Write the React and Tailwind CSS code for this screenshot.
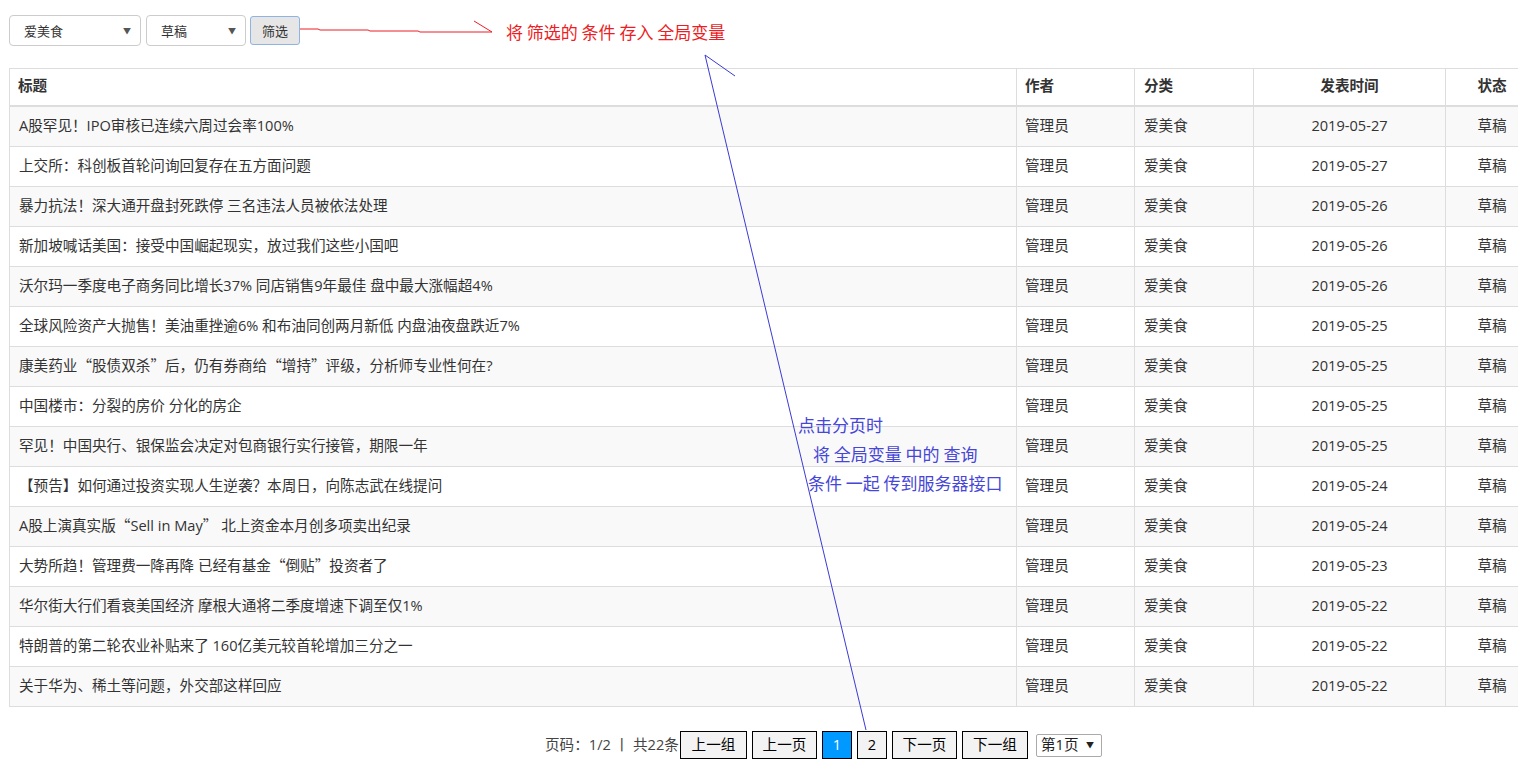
import React from "react";

const rows = [
  ["A股罕见！IPO审核已连续六周过会率100%", "2019-05-27"],
  ["上交所：科创板首轮问询回复存在五方面问题", "2019-05-27"],
  ["暴力抗法！深大通开盘封死跌停 三名违法人员被依法处理", "2019-05-26"],
  ["新加坡喊话美国：接受中国崛起现实，放过我们这些小国吧", "2019-05-26"],
  ["沃尔玛一季度电子商务同比增长37% 同店销售9年最佳 盘中最大涨幅超4%", "2019-05-26"],
  ["全球风险资产大抛售！美油重挫逾6% 和布油同创两月新低 内盘油夜盘跌近7%", "2019-05-25"],
  ["康美药业“股债双杀”后，仍有券商给“增持”评级，分析师专业性何在?", "2019-05-25"],
  ["中国楼市：分裂的房价 分化的房企", "2019-05-25"],
  ["罕见！中国央行、银保监会决定对包商银行实行接管，期限一年", "2019-05-25"],
  ["【预告】如何通过投资实现人生逆袭？本周日，向陈志武在线提问", "2019-05-24"],
  ["A股上演真实版“Sell in May” 北上资金本月创多项卖出纪录", "2019-05-24"],
  ["大势所趋！管理费一降再降 已经有基金“倒贴”投资者了", "2019-05-23"],
  ["华尔街大行们看衰美国经济 摩根大通将二季度增速下调至仅1%", "2019-05-22"],
  ["特朗普的第二轮农业补贴来了 160亿美元较首轮增加三分之一", "2019-05-22"],
  ["关于华为、稀土等问题，外交部这样回应", "2019-05-22"],
];

const latin = { fontFamily: '"Open Sans", "Noto Sans CJK SC", sans-serif' };
const cjk = { fontFamily: '"Noto Sans CJK SC", sans-serif' };

function Title({ text }) {
  const parts = text.split(/([“”])/);
  return (
    <>
      {parts.map((p, i) =>
        p === "“" || p === "”" ? (
          <span key={i} style={cjk}>
            {p}
          </span>
        ) : (
          <React.Fragment key={i}>{p}</React.Fragment>
        )
      )}
    </>
  );
}

function Select({ label, w }) {
  return (
    <div
      className={`${w} h-[31px] box-border border border-[#cccccc] rounded-[4px] bg-white flex items-center justify-between pl-[14px] pr-[9px] text-[13px] text-[#333]`}
    >
      <span className="leading-none pb-[1px]">{label}</span>
      <span className="text-[8px] text-[#555]">▼</span>
    </div>
  );
}

function PBtn({ children, w, active }) {
  return (
    <div
      className={`${w} h-[28px] box-border border border-black flex items-center justify-center text-[14.6px] leading-none ${
        active ? "bg-[#0099ff] text-white" : "bg-[#f3f3f3] text-black"
      }`}
    >
      <span className="pb-[1px]">{children}</span>
    </div>
  );
}

const cell = "box-border border-l border-[#dddddd] flex items-center leading-none pb-[3px]";

export default function App() {
  return (
    <div
      className="relative w-[1518px] h-[772px] overflow-hidden bg-white text-[#333]"
      style={{ fontFamily: '"Noto Sans CJK SC", "Noto Sans", sans-serif' }}
    >
      {/* filters */}
      <div className="flex items-center pl-[9px] pt-[15px]">
        <Select label="爱美食" w="w-[132px]" />
        <div className="ml-[5px]">
          <Select label="草稿" w="w-[100px]" />
        </div>
        <div className="ml-[4px] w-[50px] h-[29px] box-border border border-[#8fb3e3] rounded-[3px] bg-[#e6e6e6] flex items-center justify-center text-[13px] text-[#333] leading-none pb-[1px]">
          筛选
        </div>
      </div>

      {/* table */}
      <div className="mt-[22px] ml-[9px] w-[1529px] text-[14.6px]" style={latin}>
        <div className="flex h-[39px] box-border border-t border-b-2 border-[#dddddd] font-bold">
          <div className={`w-[1007px] pl-[8px] ${cell}`}>标题</div>
          <div className={`w-[118px] pl-[8px] ${cell}`}>作者</div>
          <div className={`w-[119px] pl-[9px] ${cell}`}>分类</div>
          <div className={`w-[192px] justify-center ${cell}`}>发表时间</div>
          <div className={`w-[93px] justify-center ${cell}`}>状态</div>
        </div>
        {rows.map(([title, date], i) => (
          <div
            key={i}
            className={`flex h-[40px] box-border border-b border-[#dddddd] ${
              i % 2 === 0 ? "bg-[#f9f9f9]" : "bg-white"
            }`}
          >
            <div className={`w-[1007px] pl-[9px] whitespace-pre ${cell}`}>
              <span>
                <Title text={title} />
              </span>
            </div>
            <div className={`w-[118px] pl-[8px] ${cell}`}>管理员</div>
            <div className={`w-[119px] pl-[9px] ${cell}`}>爱美食</div>
            <div className={`w-[192px] justify-center ${cell}`}>{date}</div>
            <div className={`w-[93px] justify-center ${cell}`}>草稿</div>
          </div>
        ))}
      </div>

      {/* pagination */}
      <div className="mt-[24px] pl-[545px] flex items-center text-[14.6px]" style={latin}>
        <span className="w-[133px] text-[#444] whitespace-nowrap leading-none pb-[1px]">页码：1/2 丨 共22条</span>
        <div className="ml-[2px] flex items-center gap-[5px]">
          <PBtn w="w-[67px]">上一组</PBtn>
          <PBtn w="w-[65px]">上一页</PBtn>
          <PBtn w="w-[30px]" active>1</PBtn>
          <PBtn w="w-[30px]">2</PBtn>
          <PBtn w="w-[65px]">下一页</PBtn>
          <PBtn w="w-[66px]">下一组</PBtn>
        </div>
        <div className="ml-[8px] w-[66px] h-[23px] box-border border border-[#aaaaaa] rounded-[2px] bg-white flex items-center justify-between pl-[4px] pr-[7px] text-[14.6px] text-[#222] leading-none">
          <span className="pb-[1px]">第1页</span>
          <span className="text-[8px]">▼</span>
        </div>
      </div>

      {/* annotation lines */}
      <svg className="absolute inset-0 pointer-events-none" width="1518" height="772">
        <polyline
          points="300,29 318,29 320,30 368,30 370,31 418,31 420,32 492,32"
          fill="none"
          stroke="#ee1c24"
          strokeWidth="1"
        />
        <line x1="474" y1="21" x2="492" y2="32" stroke="#ee1c24" strokeWidth="1" />
        <line x1="705" y1="55" x2="866" y2="730" stroke="#3a3ad6" strokeWidth="1" />
        <line x1="705" y1="55" x2="735" y2="76" stroke="#3a3ad6" strokeWidth="1" />
      </svg>

      {/* annotation texts */}
      <div className="absolute left-[506px] top-[20px] text-[17px] leading-[24px] text-[#ee1c24] whitespace-nowrap">
        将 筛选的 条件 存入 全局变量
      </div>
      <div className="absolute left-[798px] top-[410px] text-[17px] leading-[29px] text-[#4646d8] whitespace-pre">
        <div>点击分页时</div>
        <div className="pl-[15px]">将 全局变量 中的 查询</div>
        <div className="pl-[10px]">条件 一起 传到服务器接口</div>
      </div>
    </div>
  );
}
